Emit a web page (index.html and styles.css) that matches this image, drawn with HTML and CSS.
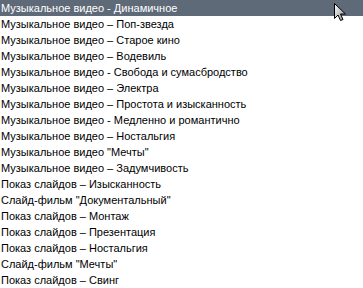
FILE: index.html
```html
<!DOCTYPE html>
<html lang="ru">
<head>
    <meta charset="UTF-8">
    <title>Стили</title>
    <link rel="stylesheet" href="styles.css">
</head>
<body>
    <ul class="list">
        <li class="item selected">Музыкальное видео - Динамичное</li>
        <li class="item">Музыкальное видео – Поп-звезда</li>
        <li class="item">Музыкальное видео – Старое кино</li>
        <li class="item">Музыкальное видео – Водевиль</li>
        <li class="item">Музыкальное видео - Свобода и сумасбродство</li>
        <li class="item">Музыкальное видео – Электра</li>
        <li class="item">Музыкальное видео – Простота и изысканность</li>
        <li class="item">Музыкальное видео - Медленно и романтично</li>
        <li class="item">Музыкальное видео – Ностальгия</li>
        <li class="item">Музыкальное видео "Мечты"</li>
        <li class="item">Музыкальное видео – Задумчивость</li>
        <li class="item">Показ слайдов – Изысканность</li>
        <li class="item">Слайд-фильм "Документальный"</li>
        <li class="item">Показ слайдов – Монтаж</li>
        <li class="item">Показ слайдов – Презентация</li>
        <li class="item">Показ слайдов – Ностальгия</li>
        <li class="item">Слайд-фильм "Мечты"</li>
        <li class="item">Показ слайдов – Свинг</li>
    </ul>

    <!-- mouse pointer over the selected row -->
    <svg class="cursor" width="14" height="20" viewBox="0 0 14 20">
        <defs>
            <linearGradient id="grey" x1="0" y1="0" x2="1" y2="1">
                <stop offset="0" stop-color="#ffffff"/>
                <stop offset="1" stop-color="#8a8a8a"/>
            </linearGradient>
        </defs>
        <path d="M0.5 0.5 L0.5 15.5 L4 12 L6.5 17.5 L9 16.5 L6.5 11 L11.5 11 Z" fill="url(#grey)" stroke="#000" stroke-width="1"/>
    </svg>
</body>
</html>
```

FILE: styles.css
```css
body {
    margin: 0;
    padding: 0;
    background: #fff;
    font-family: Tahoma, "Liberation Sans", sans-serif;
    font-size: 11px;
    color: #000;
    overflow: hidden;
}
.list {
    list-style: none;
    margin: 0;
    padding: 0;
}
.item {
    height: 16px;
    line-height: 17px;
    padding-left: 1px;
    white-space: nowrap;
}
.selected {
    background: #5f6a78;
    color: #fff;
}
.cursor {
    position: absolute;
    left: 334px;
    top: 3px;
}
```
